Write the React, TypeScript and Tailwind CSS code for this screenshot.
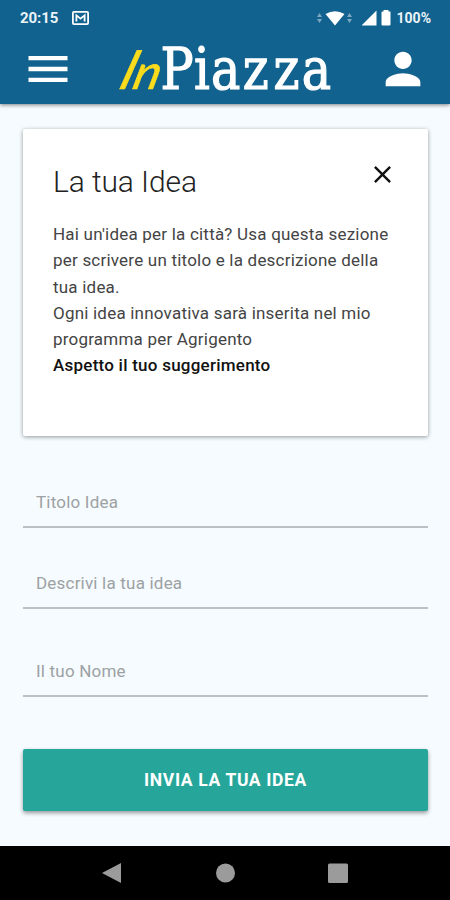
import { MdClose, MdMenu, MdPerson } from "react-icons/md";

const fields = [
  { label: "Titolo Idea", className: "h-[42px]" },
  { label: "Descrivi la tua idea", className: "mt-[39px] h-[42px]" },
  { label: "Il tuo Nome", className: "mt-[46px] h-[42px]" },
];

const StatusBar = () => (
  <div className="flex h-9 items-center justify-between pl-5 pr-[19px] text-[15px] font-bold text-[#eaf3f8]">
    <div className="flex items-center">
      <span className="w-[52px] tracking-[-0.1px]">20:15</span>
      <svg width="17" height="14" viewBox="0 0 17 14" fill="none">
        <rect x="0.9" y="0.9" width="15.2" height="12.2" rx="1" stroke="white" strokeWidth="1.8" />
        <path d="M4.4 10.5V4.4L8.5 7.6L12.6 4.4V10.5" stroke="white" strokeWidth="1.8" />
      </svg>
    </div>
    <div className="flex items-center">
      <svg width="76" height="18" viewBox="0 0 76 18" fill="white">
        <g opacity="0.45">
          <path d="M0 8L2.5 4L5 8ZM0 10L2.5 14L5 10Z" />
          <path d="M30 8L32.5 4L35 8ZM30 10L32.5 14L35 10Z" />
        </g>
        <path d="M8.5 5Q18 -0.5 27.5 5L18 16.5Z" />
        <path d="M45 16.5V16L59.5 1.5V16.5Z" />
        <path d="M66.5 2.5V1H71.5V2.5H73.5V15.5Q73.5 16.5 72.5 16.5H65.5Q64.5 16.5 64.5 15.5V3.5Q64.5 2.5 65.5 2.5Z" />
      </svg>
      <span className="ml-1 text-sm">100%</span>
    </div>
  </div>
);

const Logo = () => (
  <svg
    className="-mt-2.5 overflow-visible"
    width="236"
    height="78"
    viewBox="-10 -10 236 78"
    role="img"
    aria-label="InPiazza"
  >
    <g fill="#fbdc1c" stroke="#fbdc1c" strokeWidth="0.6" fontFamily="Lato, sans-serif" fontStyle="italic">
      <text transform="translate(-1 49) skewX(-18)" fontSize="54">
        I
      </text>
      <text transform="translate(13 49) skewX(-14) scale(1.05 1)" fontSize="48">
        n
      </text>
    </g>
    <text
      transform="translate(0 48.5) scale(0.96 1)"
      x="44.2 79.2 96.9 130 162 191.5"
      fill="white"
      stroke="white"
      strokeWidth="1.2"
      fontFamily="DejaVu Serif Condensed, DejaVu Serif, serif"
      fontSize="57"
    >
      Piazza
    </text>
  </svg>
);

const App = () => {
  return (
    <div className="flex h-[900px] w-[450px] flex-col overflow-hidden bg-[#f5fbfe] font-['Roboto',sans-serif]">
      {/* Header */}
      <header className="h-[104px] shrink-0 bg-[#11628f] shadow-[0_1px_4px_rgba(0,0,0,0.5)]">
        <StatusBar />
        <div className="flex items-start justify-between pl-[22px] pr-[21px] pt-1">
          <button className="mt-[3px]">
            <MdMenu size={52} color="white" />
          </button>
          <Logo />
          <button className="mt-[3px]">
            <MdPerson size={52} color="white" />
          </button>
        </div>
      </header>

      <main className="flex grow flex-col pl-[23px] pr-[22px] pt-[25px]">
        {/* Intro card */}
        <section className="h-[307px] rounded-xs bg-white pl-[30px] pr-[31px] pt-8 shadow-[0_1px_4px_rgba(0,0,0,0.4)]">
          <div className="flex items-start justify-between">
            <h1 className="text-[30px] font-light leading-[42px] tracking-[-0.1px] text-[#222]">La tua Idea</h1>
            <button className="-mt-px">
              <MdClose size={29} color="#111" />
            </button>
          </div>
          <p className="mt-[18px] whitespace-nowrap text-[17px] leading-[26.3px] tracking-[0.21px] text-[#444]">
            Hai un'idea per la città? Usa questa sezione
            <br />
            per scrivere un titolo e la descrizione della
            <br />
            tua idea.
            <br />
            Ogni idea innovativa sarà inserita nel mio
            <br />
            programma per Agrigento
            <br />
            <span className="font-medium tracking-[0.24px] text-[#111]">Aspetto il tuo suggerimento</span>
          </p>
        </section>

        {/* Form */}
        <form className="mt-[50px] flex flex-col">
          {fields.map((field) => (
            <label
              key={field.label}
              className={`flex items-start border-b-2 border-[#bbc0c2] pl-[13px] text-[17px] leading-8 tracking-[0.2px] text-[#9da1a3] ${field.className}`}
            >
              {field.label}
            </label>
          ))}
          <button
            type="button"
            className="mt-[52px] h-[62px] rounded-xs bg-[#26a69a] text-[17.5px] font-bold tracking-[0.64px] text-white shadow-[0_2px_4px_rgba(0,0,0,0.4)]"
          >
            INVIA LA TUA IDEA
          </button>
        </form>
      </main>

      {/* Android navigation */}
      <nav className="h-[54px] shrink-0 bg-black">
        <svg width="450" height="54" viewBox="0 0 450 54" fill="#9b9b9b">
          <path d="M102 27L121 17V37Z" />
          <circle cx="225.5" cy="27" r="9.5" />
          <rect x="328" y="17.5" width="20" height="19.5" rx="1.5" />
        </svg>
      </nav>
    </div>
  );
};

export default App;
